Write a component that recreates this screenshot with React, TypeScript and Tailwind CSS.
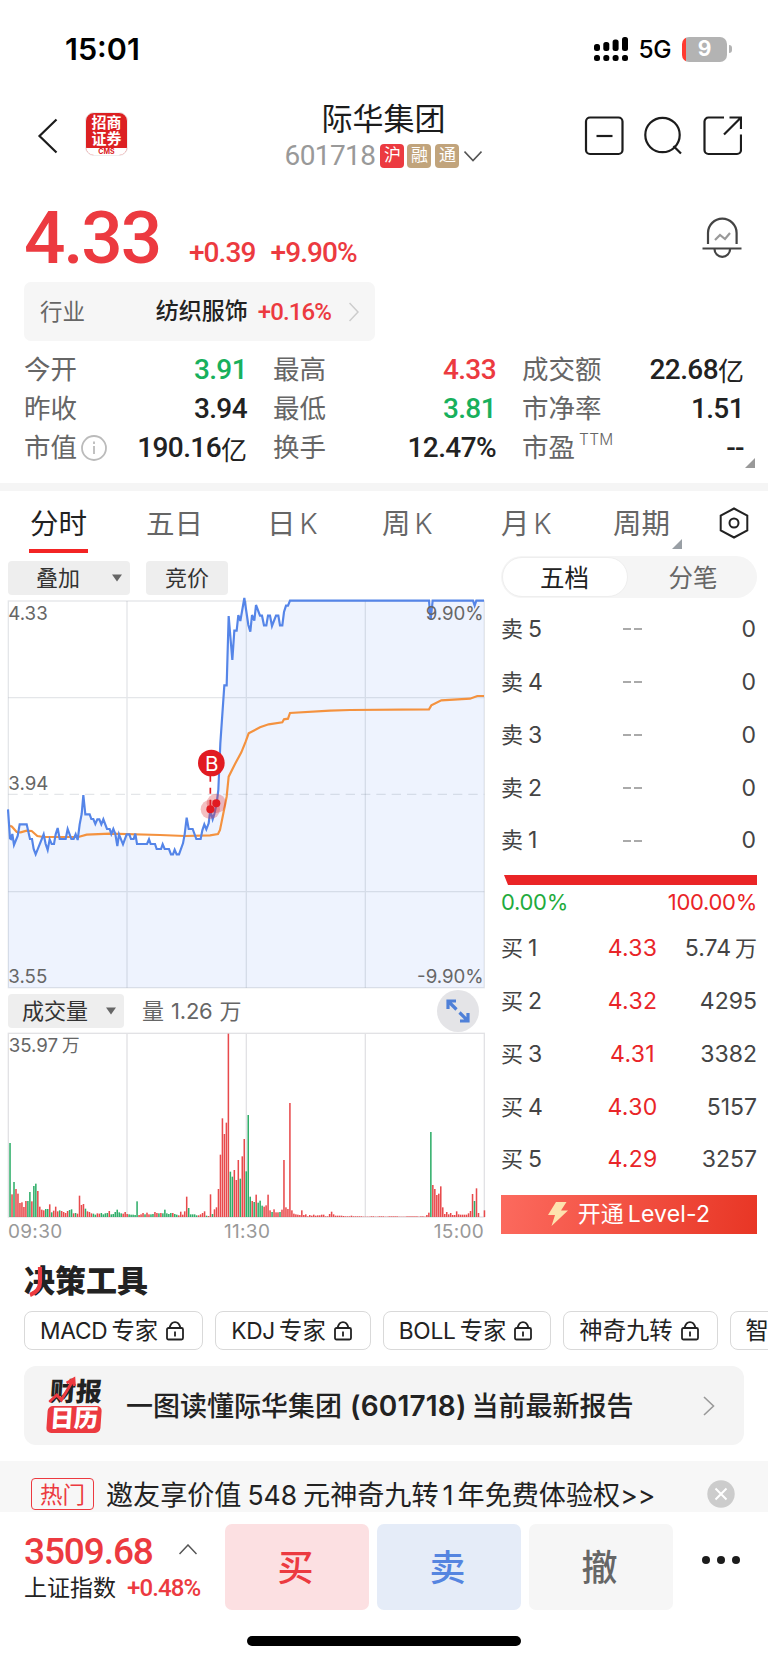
import { clsx } from "clsx";

const PRICE_LINE =
  "24,658 30,745 33,747 37,732 42,765 53,738 59,703 80,703 90,747 96,747 101,777 107,793 131,733 137,762 143,780 149,748 155,762 162,762 167,733 173,714 179,747 197,747 203,717 214,747 221,747 227,733 233,750 239,703 245,672 250,615 256,673 269,673 274,687 280,687 286,702 292,688 298,688 304,703 310,688 321,717 329,717 334,732 340,717 346,732 352,768 357,733 369,763 380,733 388,733 393,747 401,747 406,731 411,762 441,762 447,748 452,762 465,762 470,777 483,777 488,763 494,777 507,777 513,793 519,793 524,779 530,793 537,793 549,760 554,733 560,683 566,717 578,717 589,747 602,747 607,721 613,703 619,718 626,700 631,660 638,688 643,672 650,640 655,600 661,460 673,286 680,286 686,78 697,210 703,122 710,122 715,75 721,93 733,24 745,105 751,125 756,75 763,92 768,45 780,77 786,77 792,106 799,106 804,77 810,77 816,108 828,77 835,77 840,106 847,106 852,66 858,47 864,47 870,32 1287,32 1292,90 1298,32 1419,32 1424,47 1429,32 1452,32";

const AVG_LINE =
  "30,707 36,710 50,726 62,727 80,722 95,723 112,738 130,741 235,741 260,734 330,731 480,735 555,738 630,736 654,732 660,720 674,650 680,620 686,560 705,522 724,487 737,455 746,430 780,412 806,403 847,397 852,388 864,386 870,369 990,362 1050,360 1287,358 1294,346 1324,331 1410,326 1432,318 1452,318";

// one value per minute, negative = price fell
const VOLUMES = [
  -222, 68, -105, 84, 70, 42, 44, 30, 48, -48, -75, 47, -93, -100, 78, 31, 22, 20, -24, -24,
  38, -14, 19, 31, 17, -20, 18, 15, 12, 18, -21, -23, 11, -12, 10, 64, 36, 39, -25, 17,
  15, 11, -10, -7, 11, 10, -12, -8, -11, -12, 18, -8, -9, -15, -22, -14, -11, 10, 15, 9,
  -8, -7, -7, -6, -47, 6, 8, 12, -8, 13, 8, -8, -9, 15, 12, -11, 12, -11, -22, -11,
  -9, -12, 12, -9, -7, 5, 16, 7, 17, 61, -27, -8, -8, -8, -5, 5, 8, 12, 17, -4,
  3, 68, -9, 23, 29, 84, 187, 296, 249, 283, 550, -136, -121, 141, 111, 171, -115, 182, 234, -137,
  -306, -61, 48, -45, 67, -43, -49, -34, 31, 35, 67, 20, -15, 23, 14, 14, -15, 22, 171, 29,
  24, 342, 20, 10, 8, 7, 6, 20, 6, 8, 2, 6, 4, 7, 4, 5, 5, 7, 7, 2,
  2, 9, 16, 8, 4, 4, 4, 4, 3, 2, 2, 2, 4, 2, 2, 2, 2, 2, 1, 1,
  1, 1, 2, 2, 1, 1, 2, 2, 2, 1, 1, 2, 2, 2, 2, 2, 1, 1, 1, 1,
  2, 2, 2, 2, 2, 2, 1, 2, 2, 1, 6, 13, -255, 96, 84, 66, 70, 92, 29, 9,
  15, 8, 12, 6, 6, 17, 8, 7, 7, 7, 7, 11, 18, 69, -48, 86, 12, 0, 0, 20,
];

const stats = [
  { label: "今开", value: "3.91", color: "text-[#18b05c]" },
  { label: "最高", value: "4.33", color: "text-[#ec3a40]" },
  { label: "成交额", value: "22.68", unit: "亿", color: "text-[#222]" },
  { label: "昨收", value: "3.94", color: "text-[#222]" },
  { label: "最低", value: "3.81", color: "text-[#18b05c]" },
  { label: "市净率", value: "1.51", color: "text-[#222]" },
  { label: "市值", value: "190.16", unit: "亿", color: "text-[#222]", info: true },
  { label: "换手", value: "12.47%", color: "text-[#222]" },
  { label: "市盈", value: "--", color: "text-[#222]", sup: "TTM" },
];

const sells = ["5", "4", "3", "2", "1"];

const buys = [
  { n: "1", price: "4.33", amount: "5.74", unit: "万" },
  { n: "2", price: "4.32", amount: "4295" },
  { n: "3", price: "4.31", amount: "3382" },
  { n: "4", price: "4.30", amount: "5157" },
  { n: "5", price: "4.29", amount: "3257" },
];

function StatusBar() {
  return (
    <div className="flex h-[98px] items-center justify-between pr-9 pl-[65px]">
      <span className="text-[30.5px] font-semibold text-black">15:01</span>
      <div className="flex items-center">
        <svg width="35" height="26" viewBox="0 0 35 26" className="mr-[10px]">
          <rect x="0" y="8" width="6" height="7" rx="2.5" />
          <rect x="9.3" y="6" width="6" height="9" rx="2.5" />
          <rect x="18.6" y="3.5" width="6" height="11.5" rx="2.5" />
          <rect x="28" y="1" width="6" height="14" rx="2.5" />
          <rect x="0" y="19" width="6" height="6" rx="2.5" />
          <rect x="9.3" y="19" width="6" height="6" rx="2.5" />
          <rect x="18.6" y="19" width="6" height="6" rx="2.5" />
          <rect x="28" y="19" width="6" height="6" rx="2.5" />
        </svg>
        <span className="pt-px text-[24.5px] font-medium tracking-[-0.5px] text-black">5G</span>
        <div className="ml-[11px] flex h-[25px] w-[45px] items-center justify-center overflow-hidden rounded-[7px] bg-[linear-gradient(90deg,#ff3b30_4px,#b3b3b3_4px)] text-[21px] font-bold text-white">
          9
        </div>
        <div className="ml-[2px] h-2 w-[3px] rounded-r-full bg-[#b3b3b3]" />
      </div>
    </div>
  );
}

function Header() {
  return (
    <header className="flex h-[78px] items-center px-[26px]">
      <div className="flex w-[157px] items-center">
        <svg width="22" height="36" viewBox="0 0 22 36" fill="none" stroke="#1c1c1c" strokeWidth="2.2" className="-mt-[2px] ml-[11px]">
          <path d="M19.5 1.5 2.5 18l17 16.5" />
        </svg>
        <div className="-mt-[6px] ml-[26px] flex h-[44px] w-[43px] flex-col items-center overflow-hidden rounded-[9px] border border-[#eee] bg-[#dc2022]">
          <div className="w-full pt-[2px] pb-px text-center text-[15px] leading-[16px] font-bold text-white">
            招商
            <br />
            证券
          </div>
          <span className="w-full flex-1 bg-white text-center text-[7px] leading-[7px] font-bold text-[#dc2022]">CMS</span>
        </div>
      </div>
      <div className="-mt-[2px] flex flex-1 flex-col items-center">
        <h1 className="text-[31px] leading-[38px] font-normal text-[#1c1c1c]">际华集团</h1>
        <div className="flex h-[34px] items-center pt-[2px]">
          <span className="font-[Roboto] text-[28px] tracking-[-0.6px] text-[#999]">601718</span>
          <span className="ml-[5px] flex size-6 items-center justify-center rounded-[4px] bg-[#ec3a40] text-[17px] text-white">沪</span>
          <span className="ml-[3px] flex size-6 items-center justify-center rounded-[4px] bg-[#c1a47c] text-[17px] text-white">融</span>
          <span className="ml-[4px] flex size-6 items-center justify-center rounded-[4px] bg-[#c1a47c] text-[17px] text-white">通</span>
          <svg width="18" height="12" viewBox="0 0 18 12" fill="none" stroke="#555" strokeWidth="1.6" className="ml-[5px]">
            <path d="m.5 1.5 8.5 9 8.5-9" />
          </svg>
        </div>
      </div>
      <svg width="158" height="40" viewBox="0 0 158 40" fill="none" stroke="#1c1c1c" strokeWidth="2.2" className="-mt-[2px]">
        <rect x="2" y="1.5" width="36.500" height="36.500" rx="4" />
        <path d="M12.500 20h16" />
        <circle cx="78.500" cy="19" r="17.200" />
        <path d="m89.500 30 7.500 7.500" />
        <path d="M140 1.500h-15.500a4 4 0 0 0-4 4V34a4 4 0 0 0 4 4H153a4 4 0 0 0 4-4V18.500" />
        <path d="M145.500 1.500H157V13M156.500 2 140 18.500" />
      </svg>
    </header>
  );
}

function PriceRow() {
  return (
    <div className="flex h-[106px] items-end pr-[26px] pl-[24px]">
      <span className="mb-[7px] font-[Roboto] text-[73px] leading-[73px] font-medium tracking-[-2.2px] text-[#ec3a40]">4.33</span>
      <div className="mb-[9px] ml-[29px] flex gap-[15px] font-[Roboto] text-[28px] leading-[40px] font-medium tracking-[-0.9px] text-[#ec3a40]">
        <span>+0.39</span>
        <span>+9.90%</span>
      </div>
      <svg width="40" height="42" viewBox="0 0 40 42" fill="none" stroke="#444" strokeWidth="2.2" className="mb-[23px] ml-auto">
        <path d="M6 27V16a14.300 14.300 0 0 1 28.600 0v11" />
        <path d="M.5 31.500h39" />
        <path d="M12.500 32a7.800 7.800 0 0 0 15.600 0" />
        <path d="m13 23 5-5 5 4 5-6" stroke="#999" />
      </svg>
    </div>
  );
}

function Stats() {
  return (
    <div className="grid h-[142px] grid-cols-[223px_223px_222px] grid-rows-[39px_39px_40px] gap-x-[26px] pt-[9px] pl-[24px] text-[26.5px]">
      {stats.map((s) => (
        <div key={s.label} className="relative flex items-center justify-between">
          <span className="flex items-center text-[#666]">
            {s.label}
            {s.info && (
              <svg width="26" height="26" viewBox="0 0 26 26" fill="none" stroke="#bbb" strokeWidth="1.8" className="ml-[4px]">
                <circle cx="13" cy="13" r="12" />
                <path d="M13 11v8M13 6.500v2.500" />
              </svg>
            )}
            {s.sup && <span className="mb-4 ml-[4px] font-['Inter'] text-[15.5px] font-light tracking-[0.3px]">{s.sup}</span>}
          </span>
          <span className={clsx("flex items-center font-[Roboto] text-[28px] font-medium tracking-[-0.6px]", s.color)}>
            {s.value}
            {s.unit && <span className="font-['Noto_Sans_CJK_SC'] text-[26px] font-normal tracking-normal">{s.unit}</span>}
          </span>
          {s.sup && (
            <svg width="10" height="10" viewBox="0 0 10 10" fill="#999" className="absolute -right-[11px] bottom-0">
              <path d="M10 0v10H0z" />
            </svg>
          )}
        </div>
      ))}
    </div>
  );
}

function Tabs() {
  return (
    <nav className="flex h-[65px] items-start pt-[13px] pl-[29px] text-[28.5px] leading-[40px] text-[#666]">
      <div className="w-[117px] text-[#222]">
        <span className="block w-[59px] border-b-4 border-[#f32424] pb-[5px] text-center">分时</span>
      </div>
      <span className="w-[121px]">五日</span>
      <span className="w-[115px]">日<span className="ml-[4px] font-['Inter'] text-[28px] font-light">K</span></span>
      <span className="w-[119px]">周<span className="ml-[4px] font-['Inter'] text-[28px] font-light">K</span></span>
      <span className="w-[112px]">月<span className="ml-[4px] font-['Inter'] text-[28px] font-light">K</span></span>
      <span className="relative w-[106px]">
        周期
        <svg width="10" height="10" viewBox="0 0 10 10" fill="#999fa5" className="absolute bottom-[-5px] left-[59px]">
          <path d="M10 0v10H0z" />
        </svg>
      </span>
      <svg width="30" height="32" viewBox="0 0 30 32" fill="none" stroke="#222" strokeWidth="2" className="mt-[3px]">
        <path d="M15 1.500 28.300 8.500v15L15 30.500 1.700 23.500v-15z" />
        <circle cx="15" cy="16" r="4.500" />
      </svg>
    </nav>
  );
}

function Caret() {
  return (
    <svg width="10" height="8" viewBox="0 0 10 8" fill="#666">
      <path d="M0 .5h10L5 7.500z" />
    </svg>
  );
}

function PriceChart() {
  return (
    <svg width="500" height="395" viewBox="0 15 1500 1185" className="block font-['Inter'] text-[56px]">
      <polygon points={`${PRICE_LINE} 1452,1193 24,1193`} fill="#eef3fe" />
      <g stroke="#5a6478" strokeOpacity="0.16" strokeWidth="4" fill="none">
        <rect x="25" y="33" width="1428" height="1160" />
        <path d="M381 33v1160M739 33v1160M1096 33v1160M25 323h1428M25 905h1428" />
        <path d="M25 613h1428" strokeDasharray="28 18" />
      </g>
      <polyline points={AVG_LINE} fill="none" stroke="#f4923f" strokeWidth="6.500" />
      <polyline points={PRICE_LINE} fill="none" stroke="#5585e8" strokeWidth="6.500" />
      <g fill="#dc2a33" fillOpacity="0.3">
        <circle cx="631" cy="658" r="29" />
        <circle cx="649" cy="640" r="29" />
      </g>
      <g fill="#e11b22">
        <circle cx="631" cy="658" r="12" />
        <circle cx="649" cy="640" r="12" />
        <circle cx="634" cy="519" r="40" />
      </g>
      <path d="M631 557v90" stroke="#e11b22" strokeWidth="5" strokeDasharray="18 18" />
      <text x="635" y="542" textAnchor="middle" fill="#fff" fontSize="62">B</text>
      <g fill="#666">
        <text x="25" y="89">4.33</text>
        <text x="25" y="600">3.94</text>
        <text x="25" y="1178">3.55</text>
        <text x="1451" y="89" textAnchor="end">9.90%</text>
        <text x="1451" y="1178" textAnchor="end">-9.90%</text>
      </g>
    </svg>
  );
}

function VolumeChart() {
  return (
    <svg width="500" height="186" viewBox="0 156 1500 558" className="block font-['Inter','Noto_Sans_CJK_SC'] text-[56px]">
      <g stroke="#e2e2e5" strokeWidth="4" fill="none">
        <rect x="25" y="160" width="1428" height="551" />
        <path d="M381 160v551M739 160v551M1096 160v551" />
      </g>
      {VOLUMES.map((v, i) => (
        <rect
          key={i}
          x={27.8 + i * 5.955}
          y={711 - Math.abs(v)}
          width="4.600"
          height={Math.abs(v)}
          fill={v < 0 ? "#2fae69" : "#e84a4c"}
        />
      ))}
      <text x="26" y="216" fill="#666">35.97<tspan dx="12" fontSize="53">万</tspan></text>
    </svg>
  );
}

function ChartColumn() {
  return (
    <div className="w-[500px]">
      <div className="flex h-[39px] gap-4 pt-[5px] pl-2 text-[22px] text-[#333]">
        <div className="flex w-[122px] items-center justify-between rounded bg-[#eee] pr-2 pl-[28px]">
          叠加
          <Caret />
        </div>
        <div className="flex w-[82px] items-center justify-center rounded bg-[#eee]">竞价</div>
      </div>
      <PriceChart />
      <div className="flex h-[42px] items-center pr-[21px] pl-2 text-[22px]">
        <div className="flex h-[34px] w-[116px] items-center justify-between rounded bg-[#eee] pr-2 pl-[14px] text-[#333]">
          成交量
          <Caret />
        </div>
        <span className="ml-[18px] text-[#666]">
          量<span className="mx-[7px] font-['Inter'] tracking-[-0.2px]">1.26</span>万
        </span>
        <div className="ml-auto flex size-[42px] items-center justify-center rounded-full bg-[#e4e4e7]">
          <svg width="24" height="24" viewBox="0 0 24 24" fill="none" stroke="#4f80d8" strokeWidth="3.200">
            <path d="M2 10V2H10M2 2l8.500 8.500M22 14v8H14M22 22l-8.500-8.500" />
          </svg>
        </div>
      </div>
      <VolumeChart />
      <div className="flex h-[27px] items-center justify-between pt-px pr-[16px] pl-2 font-['Inter'] text-[19px] tracking-[0.3px] text-[#999]">
        <span>09:30</span>
        <span className="-ml-[2px]">11:30</span>
        <span>15:00</span>
      </div>
    </div>
  );
}

function OrderBook() {
  return (
    <div className="ml-px w-[256px] text-[22px] text-[#444]">
      <div className="flex h-[42px] rounded-full bg-[#f5f5f5] p-px text-[24.500px]">
        <div className="flex w-[126px] items-center justify-center rounded-full border border-[#eee] bg-white pt-[2px] pr-px text-[#222]">五档</div>
        <div className="flex flex-1 items-center justify-center pt-[2px] pl-[2px] text-[#666]">分笔</div>
      </div>
      <div className="pt-[5px] pr-px">
        {sells.map((n) => (
          <div key={n} className="flex h-[52.8px] items-center">
            <span className="w-[122px]">卖<span className="ml-[5px] font-['Inter'] text-[23px]">{n}</span></span>
            <span className="flex gap-[3px]">
              <i className="h-[2px] w-2 bg-[#aaa]" />
              <i className="h-[2px] w-2 bg-[#aaa]" />
            </span>
            <span className="ml-auto font-['Inter'] text-[23px]">0</span>
          </div>
        ))}
      </div>
      <div className="mt-[8px] ml-[3px] h-[10px] bg-[#ea2426] [clip-path:polygon(0_0,100%_0,100%_100%,4px_100%)]" />
      <div className="flex h-[36px] items-center justify-between font-['Inter'] text-[22px] tracking-[-0.3px]">
        <span className="text-[#1fab3d]">0.00%</span>
        <span className="text-[#ea2426]">100.00%</span>
      </div>
      <div className="pt-px">
        {buys.map((b) => (
          <div key={b.n} className="flex h-[52.8px] items-center">
            <span className="w-[71px] shrink-0">买<span className="ml-[5px] font-['Inter'] text-[23px]">{b.n}</span></span>
            <span className="w-[121px] shrink-0 text-center font-['Inter'] text-[23px] tracking-[0.3px] text-[#e92528]">{b.price}</span>
            <span className="-ml-5 flex-1 text-right whitespace-nowrap">
              <span className="font-['Inter'] text-[23px]">{b.amount}</span>
              {b.unit && <span className="ml-[4px]">{b.unit}</span>}
            </span>
          </div>
        ))}
      </div>
      <button className="mt-[9px] flex h-[39px] w-full items-center justify-center bg-[linear-gradient(100deg,#fc6a5e,#e83625)] text-[23px] text-white">
        <svg width="20" height="24" viewBox="0 0 20 24" className="mr-[10px]">
          <path d="M8 0h10.500L13 8.500h7L3.500 24l3.500-11H0z" fill="#fee2ae" />
        </svg>
        开通<span className="ml-[4px] font-['Inter'] tracking-[0.2px]">Level-2</span>
      </button>
    </div>
  );
}

function Lock() {
  return (
    <svg width="18" height="20" viewBox="0 0 18 20" fill="none" stroke="#222" strokeWidth="1.800">
      <rect x="1" y="7" width="16" height="11.500" rx="1.500" />
      <path d="M3.500 7C4.500 3 6.500 1.200 9 1.200S13.500 3 14.500 7M9 10.500v5" />
    </svg>
  );
}

function Chip({ latin, text, locked = true }: { latin?: string; text: string; locked?: boolean }) {
  return (
    <div className="flex h-[39px] shrink-0 items-center rounded-[8px] border border-[#d9d9d9] pt-px pr-[18px] pl-[15px] text-[23.300px] text-[#222]">
      {latin && <span className="mr-[4px] font-['Inter'] text-[22.700px] tracking-[-0.2px]">{latin}</span>}
      <span className="mr-[8px]">{text}</span>
      {locked && <Lock />}
    </div>
  );
}

function Tools() {
  return (
    <section className="h-[216px] pt-[19px] pl-6">
      <h2 className="relative h-[34px] text-[31px] leading-[34px] font-black text-[#222]">
        决策工具
        <svg width="14" height="30" viewBox="0 0 14 30" fill="none" stroke="#ec3a40" strokeWidth="4.200" className="absolute top-[3px] left-[5px]">
          <path d="M11 0v15q0 9-10 13" />
        </svg>
      </h2>
      <div className="mt-[13px] flex gap-3 overflow-hidden">
        <Chip latin="MACD" text="专家" />
        <Chip latin="KDJ" text="专家" />
        <Chip latin="BOLL" text="专家" />
        <Chip text="神奇九转" />
        <Chip text="智" locked={false} />
      </div>
      <div className="mt-4 mr-6 flex h-[79px] items-center rounded-[12px] bg-[#f4f4f4] pr-[29px] pl-6">
        <div className="relative w-[54px] -skew-x-[4deg]">
          <div className="text-center text-[26px] leading-[27px] font-black text-[#222]">财报</div>
          <div className="mt-px h-[27px] rounded-[5px] bg-[#ec3a40] text-center text-[24px] leading-[26px] font-black text-white">日历</div>
          <svg width="28" height="28" viewBox="0 0 28 28" fill="none" stroke="#ec3a40" strokeWidth="3" className="absolute -top-[2px] left-0">
            <path d="m1 26 7-7 5 5L23 5M17 7l7-4 1 7" />
          </svg>
        </div>
        <span className="mt-[2px] ml-[24px] text-[27px] font-medium whitespace-nowrap text-[#222]">
          一图读懂际华集团
          <span className="mr-[5px] ml-[8px] font-['Inter'] text-[28px] font-semibold tracking-[0.2px]">(601718)</span>
          当前最新报告
        </span>
        <svg width="12" height="20" viewBox="0 0 12 20" fill="none" stroke="#999" strokeWidth="1.600" className="ml-auto">
          <path d="m1 1 9.500 9L1 19" />
        </svg>
      </div>
    </section>
  );
}

function HotStrip() {
  return (
    <div className="flex h-[51px] items-end bg-[#f7f7f7] pr-[33px] pl-[31px]">
      <span className="mb-[2px] flex h-[32px] w-[63px] items-center justify-center rounded-[4px] border border-[#ec3a40] pt-px text-[22.500px] text-[#ec3a40]">热门</span>
      <span className="ml-[12px] text-[27.100px] leading-[33px] whitespace-nowrap text-[#222]">
        邀友享价值<span className="mx-[6px] font-['Inter'] text-[26.500px]">548</span>元神奇九转<span className="mx-[4px] font-['Inter']">1</span>年免费体验权<span className="font-['Inter'] text-[26.500px]">&gt;&gt;</span>
      </span>
      <svg width="28" height="28" viewBox="0 0 28 28" className="mb-1 ml-auto">
        <circle cx="14" cy="14" r="13.700" fill="#ccc" />
        <path d="m8.500 8.500 11 11m0-11-11 11" stroke="#fff" strokeWidth="2" />
      </svg>
    </div>
  );
}

function BottomBar() {
  return (
    <footer className="h-[151px]">
      <div className="flex h-[98px] pt-3 pl-[24px]">
        <div className="w-[201px] text-[#ec3a40]">
          <div className="flex h-[52px] items-center pt-[3px] font-[Roboto] text-[37px] font-medium tracking-[-1.100px]">
            3509.68
            <svg width="18" height="11" viewBox="0 0 18 11" fill="none" stroke="#555" strokeWidth="1.500" className="mb-[5px] ml-[26px]">
              <path d="m.5 10 8.500-9 8.500 9" />
            </svg>
          </div>
          <div className="flex items-center text-[23px] leading-[24px]">
            <span className="text-[#222]">上证指数</span>
            <span className="ml-[11px] font-[Roboto] text-[24px] font-medium tracking-[-0.900px]">+0.48%</span>
          </div>
        </div>
        <div className="flex gap-2 text-[36px] font-medium">
          <button className="h-[86px] w-36 rounded-[7px] bg-[#fce0e2] pt-[2px] pr-[3px] text-[#ec3a40]">买</button>
          <button className="h-[86px] w-36 rounded-[7px] bg-[#e5ecf8] pt-[2px] pr-[3px] text-[#5585e0]">卖</button>
          <button className="h-[86px] w-36 rounded-[7px] bg-[#f6f6f6] pt-[2px] pr-[3px] text-[#666]">撤</button>
        </div>
        <div className="mt-8 ml-[29px] flex gap-[7px]">
          <i className="size-2 rounded-full bg-[#1c1c1c]" />
          <i className="size-2 rounded-full bg-[#1c1c1c]" />
          <i className="size-2 rounded-full bg-[#1c1c1c]" />
        </div>
      </div>
      <div className="mx-auto mt-[26px] h-[10px] w-[274px] rounded-full bg-black" />
    </footer>
  );
}

export default function App() {
  return (
    <div className="h-[1663px] w-[768px] overflow-hidden bg-white font-['Inter','Noto_Sans_CJK_SC',sans-serif]">
      <StatusBar />
      <Header />
      <PriceRow />
      <div className="ml-6 flex h-[59px] w-[351px] items-center rounded-[7px] bg-[#f6f6f6] pr-4 pl-4 text-[22.500px]">
        <span className="text-[#666]">行业</span>
        <span className="ml-auto text-[23px] font-medium text-[#222]">纺织服饰</span>
        <span className="ml-[10px] font-[Roboto] text-[24px] font-medium tracking-[-0.900px] text-[#ec3a40]">+0.16%</span>
        <svg width="10" height="20" viewBox="0 0 10 20" fill="none" stroke="#ccc" strokeWidth="1.500" className="ml-[18px]">
          <path d="m.5 1 8.500 9-8.500 9" />
        </svg>
      </div>
      <Stats />
      <div className="h-2 bg-[#f5f5f5]" />
      <Tabs />
      <div className="flex h-[689px]">
        <ChartColumn />
        <OrderBook />
      </div>
      <Tools />
      <HotStrip />
      <BottomBar />
    </div>
  );
}
